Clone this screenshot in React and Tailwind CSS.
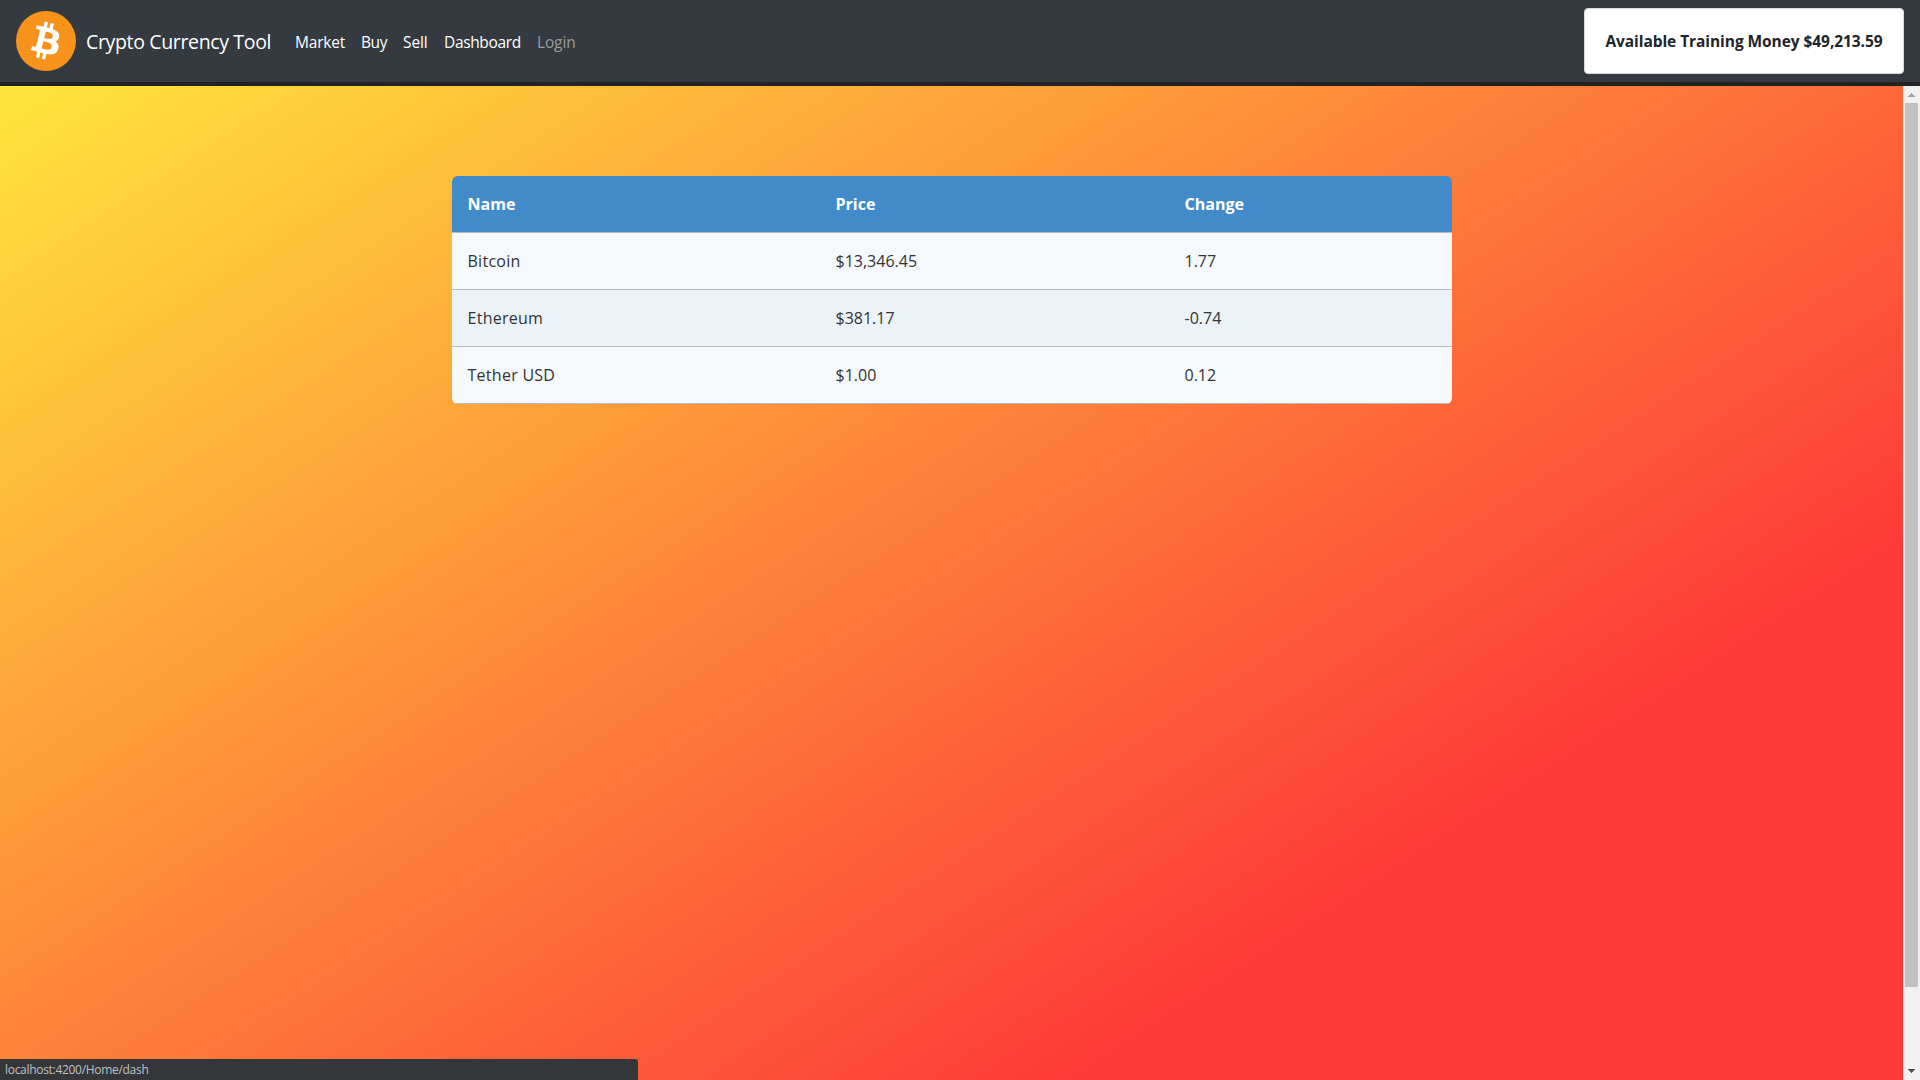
const links = [
  { label: "Market", style: "w-[50px] tracking-[-0.2px]" },
  { label: "Buy", style: "w-[26px] tracking-[-0.4px]" },
  { label: "Sell", style: "w-[25px] tracking-[-0.1px]" },
  { label: "Dashboard", style: "w-[77px] tracking-[-0.35px]" },
];

const rows = [
  ["Bitcoin", "$13,346.45", "1.77"],
  ["Ethereum", "$381.17", "-0.74"],
  ["Tether USD", "$1.00", "0.12"],
];

function BitcoinLogo() {
  return (
    <svg className="size-[60px]" viewBox="0 0 64 64">
      <circle cx="32" cy="32" r="32" fill="#f7931a" />
      <path
        fill="#fff"
        d="m46.103,27.444c0.637-4.258-2.605-6.547-7.038-8.074l1.438-5.768-3.511-0.875-1.4,5.616c-0.923-0.23-1.871-0.447-2.813-0.662l1.41-5.653-3.509-0.875-1.439,5.766c-0.764-0.174-1.514-0.346-2.242-0.527l0.004-0.018-4.842-1.209-0.934,3.75s2.605,0.597,2.55,0.634c1.422,0.355,1.679,1.296,1.636,2.042l-1.638,6.571c0.098,0.025,0.225,0.061,0.365,0.117-0.117-0.029-0.242-0.061-0.371-0.092l-2.296,9.205c-0.174,0.432-0.615,1.08-1.609,0.834,0.035,0.051-2.552-0.637-2.552-0.637l-1.743,4.019,4.569,1.139c0.85,0.213,1.683,0.436,2.503,0.646l-1.453,5.834,3.507,0.875,1.439-5.772c0.958,0.26,1.888,0.5,2.798,0.726l-1.434,5.745,3.511,0.875,1.453-5.823c5.987,1.133,10.489,0.676,12.384-4.739,1.527-4.36-0.076-6.875-3.226-8.515,2.294-0.529,4.022-2.038,4.483-5.155zm-8.022,11.249c-1.085,4.36-8.426,2.003-10.806,1.412l1.928-7.729c2.38,0.594,10.012,1.77,8.878,6.317zm1.086-11.312c-0.99,3.966-7.1,1.951-9.082,1.457l1.748-7.01c1.982,0.494,8.365,1.416,7.334,5.553z"
      />
    </svg>
  );
}

function Navbar() {
  return (
    <header className="flex h-[86px] shrink-0 items-center justify-between border-b-4 border-[#222] bg-[#343a40] px-4">
      <div className="flex items-center">
        <BitcoinLogo />
        <span className="ml-2.5 w-[209px] whitespace-nowrap pt-0.5 text-[19.5px] leading-[30px] tracking-[-0.35px] text-white">
          Crypto Currency Tool
        </span>
        <nav className="flex gap-4 whitespace-nowrap pt-px text-[15.5px] leading-6 text-white">
          {links.map((l) => (
            <a key={l.label} className={l.style}>{l.label}</a>
          ))}
          <a className="tracking-[-0.15px] text-[#999c9f]">Login</a>
        </nav>
      </div>
      <div className="flex h-[66px] w-80 items-center justify-center whitespace-nowrap rounded border border-[#d8d9da] bg-white pt-0.5 text-[15.5px] font-bold tracking-[-0.07px] text-[#212529]">
        Available Training Money $49,213.59
      </div>
    </header>
  );
}

function PriceTable() {
  return (
    <div className="h-[228px] w-[1000px] overflow-hidden rounded-md text-base">
      <div className="grid h-[57px] grid-cols-[368px_349px_1fr] items-center border-b border-[#b9bdc1] bg-[#428bca] px-4 font-bold text-white">
        <span>Name</span>
        <span>Price</span>
        <span>Change</span>
      </div>
      {rows.map(([name, price, change]) => (
        <div
          key={name}
          className="grid h-[57px] grid-cols-[368px_349px_1fr] items-center border-b border-[#b9bdc1] px-4 font-medium text-[#333] even:bg-[#f5f9fc] odd:bg-[#ebf3f9]"
        >
          <span className="tracking-[0.27px]">{name}</span>
          <span>{price}</span>
          <span>{change}</span>
        </div>
      ))}
    </div>
  );
}

function Scrollbar() {
  return (
    <div className="flex w-[17px] shrink-0 flex-col items-center bg-[#f1f1f1]">
      <svg className="size-[17px] shrink-0" viewBox="0 0 17 17" shapeRendering="crispEdges">
        <path d="M5 11h7v-1h-1V9h-1V8H9V7H8v1H7v1H6v1H5z" fill="#a3a3a3" />
      </svg>
      <div className="h-[884px] w-[13px] bg-[#c1c1c1]" />
      <div className="flex-1" />
      <svg className="size-[17px] shrink-0" viewBox="0 0 17 17" shapeRendering="crispEdges">
        <path d="M5 6h7v1h-1v1h-1v1H9v1H8V9H7V8H6V7H5z" fill="#505050" />
      </svg>
    </div>
  );
}

export default function App() {
  return (
    <div className="relative flex h-[1080px] w-[1920px] flex-col overflow-hidden font-['Open_Sans',sans-serif]">
      <Navbar />
      <div className="flex min-h-0 flex-1">
        <main className="flex h-[1080px] flex-1 justify-center bg-[linear-gradient(147deg,#ffe53b_0%,#fd3838_74%)] pt-[90px]">
          <PriceTable />
        </main>
        <Scrollbar />
      </div>
      <div className="absolute bottom-0 left-0 flex h-[21px] w-[638px] items-center rounded-tr-[3px] bg-[#35363a] pl-[5px] text-[12px] tracking-[-0.3px] text-[#bdc1c6]">
        localhost:4200/Home/dash
      </div>
    </div>
  );
}
